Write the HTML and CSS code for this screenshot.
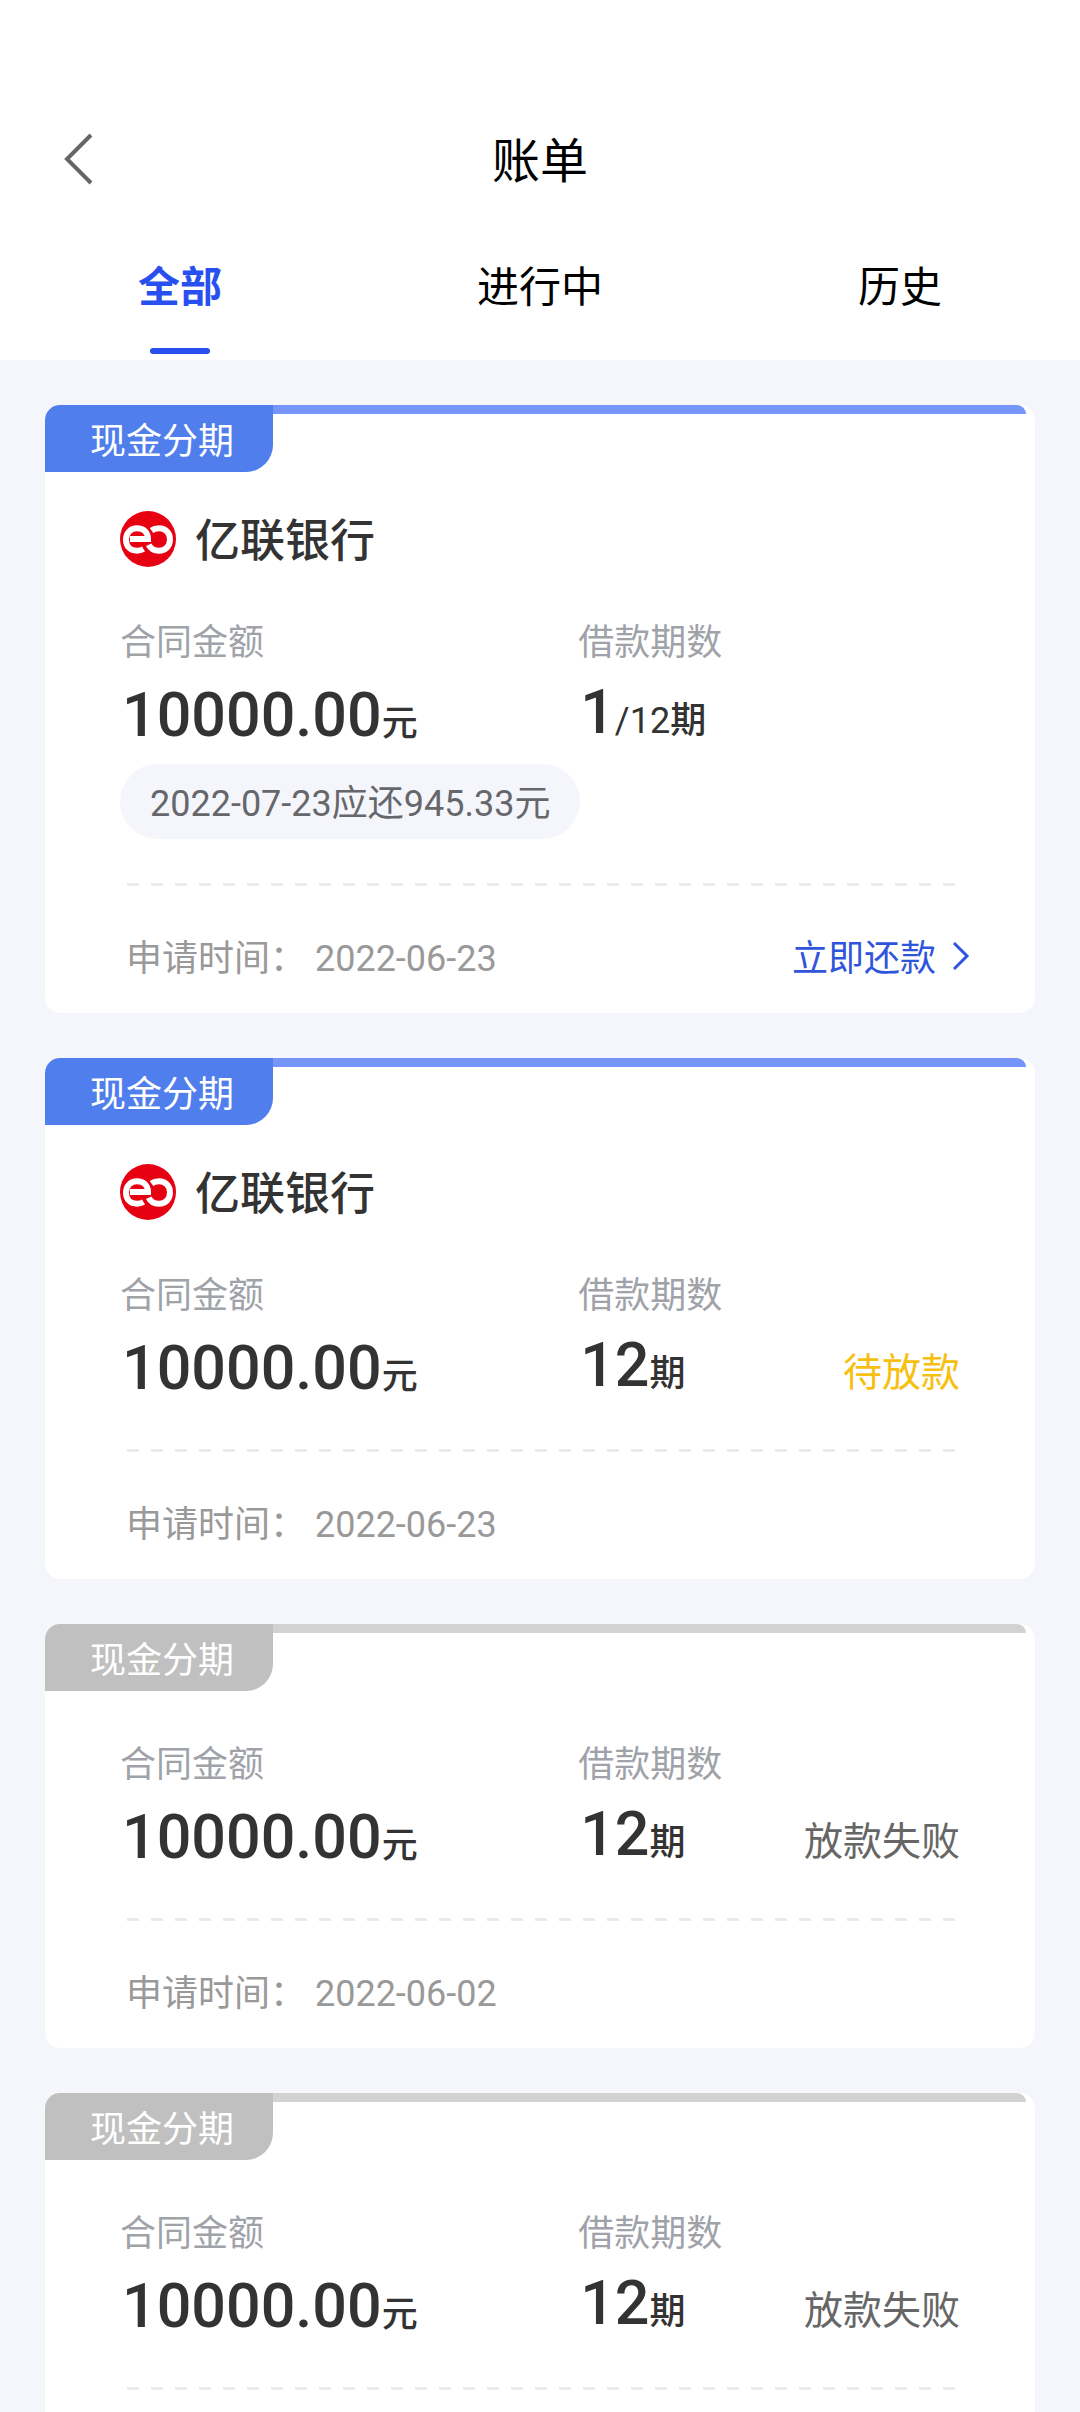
FILE: index.html
```html
<!DOCTYPE html>
<html lang="zh-CN">
<head>
<meta charset="utf-8">
<meta name="viewport" content="width=device-width, initial-scale=1">
<title>账单</title>
<link rel="stylesheet" href="styles.css">
</head>
<body>
<svg class="sprite" aria-hidden="true">
  <symbol id="bank-logo" viewBox="0 0 56 56">
    <circle cx="28" cy="28" r="28" fill="#e60012"/>
    <g fill="none" stroke="#fff" stroke-width="6">
      <path d="M10 28h18c0-6.500-4.500-10.700-11-10.700S6 22 6 28.700s4.500 11 11 11c2.500 0 4.500-.5 6.500-1.700"/>
      <path d="M31.500 19.500c2-1.500 4.500-2.200 7.500-2.200 6.500 0 11 4.700 11 11.200s-4.500 11.200-11 11.200c-5.500 0-8.500-2.200-10.300-6"/>
    </g>
  </symbol>
</svg>
<div class="app">
  <header class="header">
    <div class="titlebar">
      <button class="back" type="button" aria-label="返回">
        <svg class="back-icon" viewBox="0 0 30 54" aria-hidden="true"><path d="M28 3 4 27l24 24"/></svg>
      </button>
      <h1 class="title">账单</h1>
    </div>
    <nav class="tabs">
      <button class="tab tab-active" type="button">全部</button>
      <button class="tab" type="button">进行中</button>
      <button class="tab" type="button">历史</button>
    </nav>
  </header>
  <main class="list">
    <article class="card">
      <div class="card-top"><span class="tag">现金分期</span></div>
      <div class="card-body">
        <div class="bank"><svg class="bank-logo" aria-hidden="true"><use href="#bank-logo"/></svg><h2 class="bank-name">亿联银行</h2></div>
        <div class="details">
          <div><div class="label">合同金额</div><div class="amount">10000.00<span class="unit">元</span></div></div>
          <div><div class="label">借款期数</div><div class="term">1<span class="unit"><span class="total">/12</span>期</span></div></div>
        </div>
        <div class="due">2022-07-23应还945.33元</div>
        <div class="divider"></div>
        <footer class="card-foot">
          <span>申请时间： 2022-06-23</span>
          <a class="repay" href="#repay">立即还款<svg class="repay-icon" viewBox="0 0 18 30" aria-hidden="true"><path d="m2 2 13 13L2 28"/></svg></a>
        </footer>
      </div>
    </article>
    <article class="card">
      <div class="card-top"><span class="tag">现金分期</span></div>
      <div class="card-body">
        <div class="bank"><svg class="bank-logo" aria-hidden="true"><use href="#bank-logo"/></svg><h2 class="bank-name">亿联银行</h2></div>
        <div class="details">
          <div><div class="label">合同金额</div><div class="amount">10000.00<span class="unit">元</span></div></div>
          <div class="term-cell"><div><div class="label">借款期数</div><div class="term">12<span class="unit">期</span></div></div><span class="status status-pending">待放款</span></div>
        </div>
        <div class="divider"></div>
        <footer class="card-foot"><span>申请时间： 2022-06-23</span></footer>
      </div>
    </article>
    <article class="card card-closed">
      <div class="card-top"><span class="tag">现金分期</span></div>
      <div class="card-body">
        <div class="details">
          <div><div class="label">合同金额</div><div class="amount">10000.00<span class="unit">元</span></div></div>
          <div class="term-cell"><div><div class="label">借款期数</div><div class="term">12<span class="unit">期</span></div></div><span class="status">放款失败</span></div>
        </div>
        <div class="divider"></div>
        <footer class="card-foot"><span>申请时间： 2022-06-02</span></footer>
      </div>
    </article>
    <article class="card card-closed">
      <div class="card-top"><span class="tag">现金分期</span></div>
      <div class="card-body">
        <div class="details">
          <div><div class="label">合同金额</div><div class="amount">10000.00<span class="unit">元</span></div></div>
          <div class="term-cell"><div><div class="label">借款期数</div><div class="term">12<span class="unit">期</span></div></div><span class="status">放款失败</span></div>
        </div>
        <div class="divider"></div>
        <footer class="card-foot"></footer>
      </div>
    </article>
  </main>
</div>
</body>
</html>
```
FILE: styles.css
```css
* {
  box-sizing: border-box;
}

body {
  margin: 0;
  background: #f5f6fc;
  color: #333;
  font-family: Roboto, "Noto Sans CJK SC", sans-serif;
  font-size: 36px;
  line-height: 54px;
}

button {
  padding: 0;
  border: 0;
  background: none;
  color: inherit;
  font: inherit;
}

.sprite {
  display: none;
}

.app {
  display: flex;
  flex-direction: column;
  height: 100vh;
}

/* Header: room for the status bar, then title and tabs */
.header {
  flex: none;
  padding-top: 96px;
  background: #fff;
  color: #000;
}

.titlebar {
  display: grid;
  grid-template-columns: 1fr auto 1fr;
  align-items: center;
  height: 126px;
  padding: 0 63px;
}

.back {
  display: flex;
  justify-self: start;
}

.back-icon {
  width: 30px;
  height: 54px;
  fill: none;
  stroke: #666;
  stroke-width: 4;
}

.title {
  margin: 0;
  padding-top: 6px;
  font-size: 48px;
  font-weight: 400;
  line-height: 72px;
}

.tabs {
  display: grid;
  grid-template-columns: repeat(3, 1fr);
}

.tab {
  display: flex;
  flex-direction: column;
  align-items: center;
  height: 138px;
  padding: 39px 0 6px;
  font-size: 42px;
}

.tab-active {
  color: #2850f0;
  font-weight: 700;
}

.tab-active::after {
  content: "";
  width: 60px;
  height: 6px;
  margin-top: auto;
  border-radius: 3px;
  background: #2850f0;
}

/* Bill list */
.list {
  flex: 1;
  min-height: 0;
  padding: 45px;
  overflow-y: auto;
  scrollbar-width: none;
}

.card {
  margin-bottom: 45px;
  border-radius: 15px;
  background: #fff;
}

.card-top {
  display: flex;
  align-items: flex-start;
  padding-right: 9px;
  color: #7695fa;
}

.card-top::after {
  content: "";
  flex: 1;
  height: 9px;
  border-top-right-radius: 9px;
  background: currentColor;
}

.tag {
  height: 67px;
  padding: 10px 39px 0 45px;
  border-radius: 15px 0 27px 0;
  background: #507eec;
  color: #fff;
}

.card-closed .card-top {
  color: #d2d2d2;
}

.card-closed .tag {
  background: #c0c0c0;
}

.card-body {
  padding: 0 75px 27px;
}

.bank {
  display: flex;
  align-items: center;
  gap: 19px;
  height: 97px;
  padding-top: 37px;
}

.bank-logo {
  width: 56px;
  height: 56px;
}

.bank-name {
  margin: 0;
  padding-top: 6px;
  font-size: 45px;
  font-weight: 500;
  line-height: 60px;
}

.details {
  display: grid;
  grid-template-columns: 6fr 5fr;
  padding-top: 47px;
}

.label {
  color: #9fa3a9;
}

.amount,
.term {
  padding-left: 2px;
  font-size: 61px;
  font-weight: 500;
  line-height: 90px;
  white-space: nowrap;
}

.term {
  line-height: 84px;
}

.unit {
  font-size: 36px;
  line-height: 36px;
}

.total {
  font-weight: 400;
}

.term-cell {
  display: flex;
  justify-content: space-between;
}

.status {
  align-self: flex-end;
  color: #666;
  font-size: 39px;
  line-height: 80px;
}

.status-pending {
  color: #f7c010;
}

.due {
  width: fit-content;
  margin-top: 4px;
  padding: 5px 30px 0;
  border-radius: 38px;
  background: #f5f6fc;
  color: #66676b;
  line-height: 70px;
}

.divider {
  height: 3px;
  margin: 36px 3px 0 7px;
  background: repeating-linear-gradient(90deg, #ebebeb 0 12px, transparent 12px 24px);
}

.due + .divider {
  margin-top: 44px;
}

.card-foot {
  display: flex;
  justify-content: space-between;
  min-height: 54px;
  margin: 46px -10px 0 6px;
  color: #999;
}

.repay {
  display: flex;
  align-items: center;
  gap: 16px;
  color: #2f55dc;
  text-decoration: none;
}

.repay-icon {
  width: 18px;
  height: 30px;
  margin-bottom: 6px;
  fill: none;
  stroke: currentColor;
  stroke-width: 3;
}
```
